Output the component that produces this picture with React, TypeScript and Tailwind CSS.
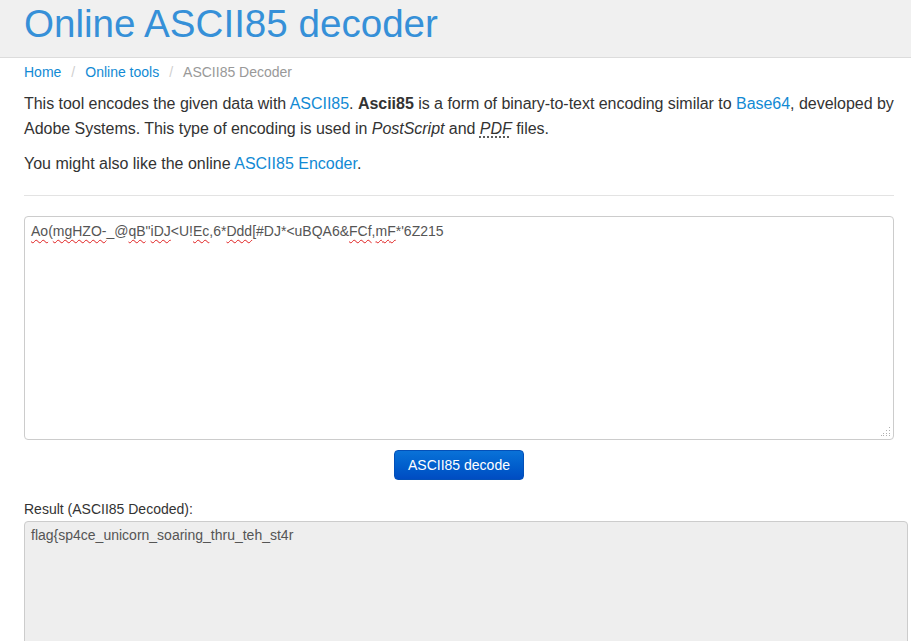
import React from "react";

const W = ({ children }: { children: React.ReactNode }) => (
  <span className="underline decoration-wavy decoration-[#e02020] decoration-1 underline-offset-[3px]">{children}</span>
);

export default function App() {
  return (
    <div className="min-h-[641px] bg-white text-[#333] font-['Liberation_Sans',Arial,sans-serif]">
      <div className="h-[58px] bg-[#f0f0f0] border-b border-[#dcdcdc] px-6">
        <h1 className="text-[38.6px] leading-[48px] pt-0 text-[#3690d8] font-normal">Online ASCII85 decoder</h1>
      </div>
      <div className="pl-6 pr-[17px]">
        <div className="pt-[4px] text-[14px] leading-[20px] flex items-center">
          <a className="text-[#128ad4]">Home</a>
          <span className="px-[10px] text-[#cfcfcf]">/</span>
          <a className="text-[#128ad4]">Online tools</a>
          <span className="px-[10px] text-[#cfcfcf]">/</span>
          <span className="text-[#999]">ASCII85 Decoder</span>
        </div>
        <p className="mt-[9px] -mr-[8px] text-[16px] leading-[25px] tracking-[-0.03px]">
          This tool encodes the given data with <a className="text-[#128ad4]">ASCII85</a>. <b>Ascii85</b> is a form of binary-to-text encoding similar to <a className="text-[#128ad4]">Base64</a>, developed by Adobe Systems. This type of encoding is used in <i>PostScript</i> and <i><abbr className="underline decoration-dotted underline-offset-[3px]">PDF</abbr></i> files.
        </p>
        <p className="mt-[10px] text-[16px] leading-[25px]">
          You might also like the online <a className="text-[#128ad4]">ASCII85 Encoder</a>.
        </p>
        <div className="mt-[19px] border-t border-[#e3e3e3] mr-0" />
        <div className="mt-[20px] relative h-[224px] border border-[#cccccc] rounded-[4px] bg-white px-[6px] py-[4px] text-[14px] leading-[20px] text-[#555]">
          <W>Ao</W>(<W>mgHZO-</W>_@<W>qB</W>"<W>iDJ</W>&lt;U!<W>Ec</W>,6*<W>Ddd</W>[#DJ*&lt;uBQA6&amp;<W>FCf</W>,<W>mF</W>*'6Z215
          <svg className="absolute right-[2px] bottom-[2px]" width="10" height="10" viewBox="0 0 10 10">
            <g fill="#b0b0b0">
              <rect x="8" y="0" width="1" height="1" />
              <rect x="8" y="3" width="1" height="1" />
              <rect x="5" y="3" width="1" height="1" />
              <rect x="8" y="6" width="1" height="1" />
              <rect x="5" y="6" width="1" height="1" />
              <rect x="2" y="6" width="1" height="1" />
              <rect x="8" y="8" width="1" height="1" />
              <rect x="5" y="8" width="1" height="1" />
              <rect x="2" y="8" width="1" height="1" />
              <rect x="0" y="8" width="1" height="1" />
            </g>
          </svg>
        </div>
        <div className="flex justify-center mt-[10px]">
          <button className="h-[30px] w-[130px] rounded-[4px] border border-[#0350b8] bg-gradient-to-b from-[#0a72d8] to-[#004cc2] text-white text-[14px] leading-[20px]">
            ASCII85 decode
          </button>
        </div>
        <div className="mt-[19px] text-[14px] leading-[20px]">Result (ASCII85 Decoded):</div>
        <div className="mt-[2px] -mr-[14px] h-[160px] border border-[#cccccc] rounded-[4px] bg-[#eeeeee] px-[6px] py-[3px] text-[14px] leading-[20px] text-[#555]">
          flag{"{"}sp4ce_unicorn_soaring_thru_teh_st4r
        </div>
      </div>
    </div>
  );
}
